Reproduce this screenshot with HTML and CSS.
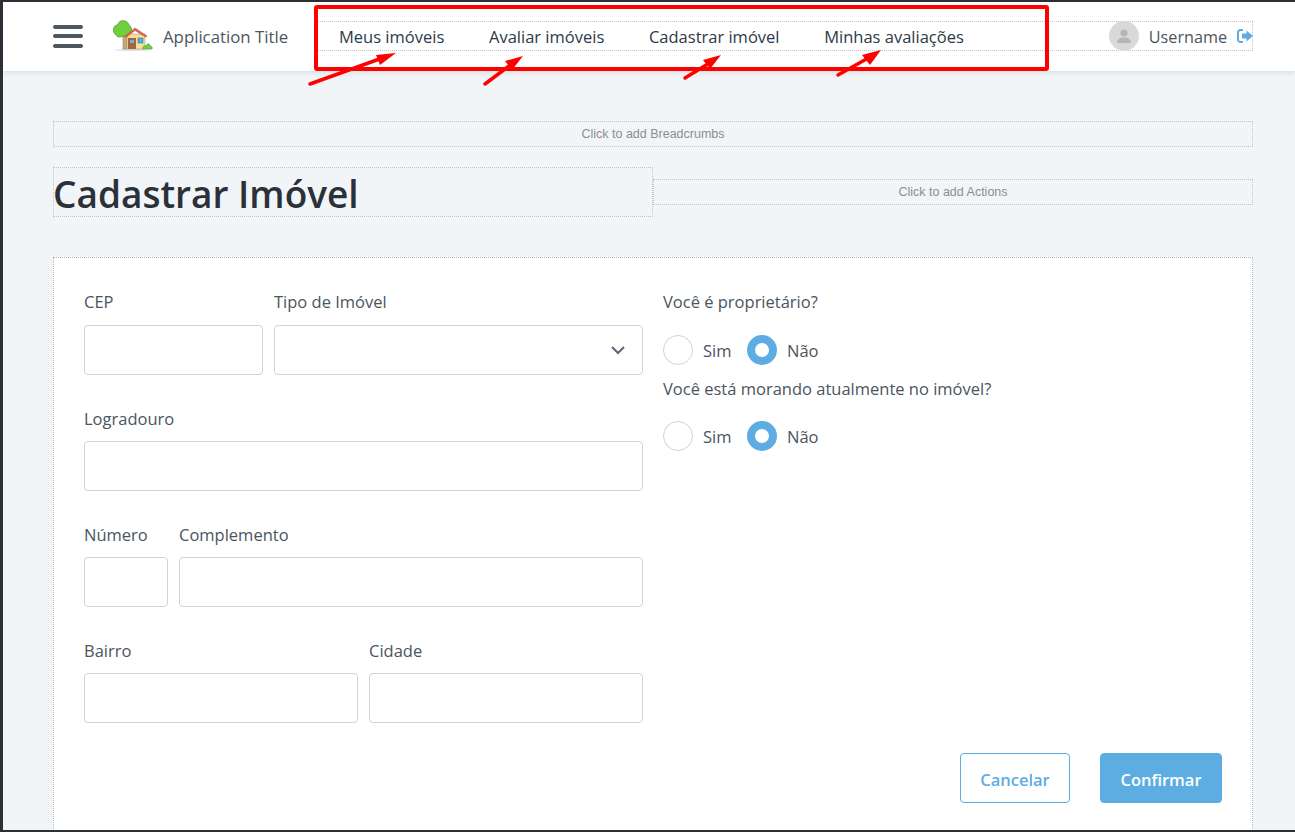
FILE: index.html
```html
<!DOCTYPE html>
<html lang="en">
<head>
    <meta charset="UTF-8">
    <meta name="viewport" content="width=device-width, initial-scale=1.0">
    <title>Cadastrar Imóvel</title>
    <link rel="stylesheet" href="styles.css">
</head>
<body>
    <div class="window">
        <header class="header">
            <div class="menu-icon"><span></span><span></span><span></span></div>
            <svg class="logo" width="40" height="32" viewBox="0 0 40 32">
                <ellipse cx="20" cy="30" rx="19" ry="1" fill="#e3e3e3"/>
                <rect x="10" y="16" width="4" height="13" fill="#c9a878" stroke="#8d7a5c" stroke-width=".5"/>
                <path d="M8 1c4-1 7 1 8 4 3 2 3 6 1 8-1 3-5 4-7 3-3 2-6 1-8-2-2-2-2-6 0-8 1-1 2-1 3-1 0-2 1-3 3-4z" fill="#6fd03c" stroke="#5b8f3a" stroke-width=".8"/>
                <rect x="14" y="14" width="18" height="15" fill="#f6dd9c" stroke="#a8946a" stroke-width=".5"/>
                <path d="M12 16l10-8 12 8-1.500 1L22 10.500 13.500 17z" fill="#e5654c" stroke="#b0503f" stroke-width=".6"/>
                <rect x="15" y="18" width="8" height="11" fill="#a5663c"/>
                <rect x="17" y="20" width="4" height="3" fill="#5fb7de"/>
                <rect x="25" y="18" width="5" height="5" fill="#3fb5ee" stroke="#59606a" stroke-width=".5"/>
                <path d="M30 29c-1-2 1-4 3-3 1-3 4-3 4 0 2 0 3 2 2 3z" fill="#6fd03c" stroke="#5b8f3a" stroke-width=".5"/>
            </svg>
            <span class="app-title">Application Title</span>
            <div class="nav-bar">
                <nav class="nav">
                    <a href="#">Meus imóveis</a>
                    <a href="#">Avaliar imóveis</a>
                    <a href="#">Cadastrar imóvel</a>
                    <a href="#">Minhas avaliações</a>
                </nav>
                <div class="user">
                    <div class="avatar">
                        <svg width="16" height="16" viewBox="0 0 16 16"><circle cx="8" cy="5" r="3.600" fill="#b5b5b5"/><path d="M1 15c0-4 3-5 5-5.500h4c2 .5 5 1.500 5 5.500z" fill="#b5b5b5"/></svg>
                    </div>
                    <span class="username">Username</span>
                    <svg class="logout" width="16" height="14" viewBox="0 0 16 14">
                        <path d="M6 1H3.500A2.500 2.500 0 0 0 1 3.500v7A2.500 2.500 0 0 0 3.500 13H6" fill="none" stroke="#5dade2" stroke-width="2"/>
                        <path d="M5 4.500h4.500V1.500L16 7l-6.500 5.500v-3H5z" fill="#5dade2"/>
                    </svg>
                </div>
            </div>
        </header>

        <main class="content">
            <div class="placeholder breadcrumbs">Click to add Breadcrumbs</div>
            <div class="title-row">
                <h1 class="title">Cadastrar Imóvel</h1>
                <div class="placeholder actions">Click to add Actions</div>
            </div>

            <section class="card">
                <div class="form-columns">
                    <div class="form-left">
                        <div class="form-row">
                            <div class="field w-cep"><label>CEP</label><input type="text"></div>
                            <div class="field grow">
                                <label>Tipo de Imóvel</label>
                                <div class="select">
                                    <svg width="14" height="9" viewBox="0 0 14 9"><path d="M1 1l6 6 6-6" fill="none" stroke="#5a6570" stroke-width="2"/></svg>
                                </div>
                            </div>
                        </div>
                        <div class="form-row">
                            <div class="field grow"><label>Logradouro</label><input type="text"></div>
                        </div>
                        <div class="form-row">
                            <div class="field w-num"><label>Número</label><input type="text"></div>
                            <div class="field grow"><label>Complemento</label><input type="text"></div>
                        </div>
                        <div class="form-row">
                            <div class="field grow"><label>Bairro</label><input type="text"></div>
                            <div class="field grow"><label>Cidade</label><input type="text"></div>
                        </div>
                    </div>
                    <div class="form-right">
                        <div class="question">
                            <label>Você é proprietário?</label>
                            <div class="radios">
                                <span class="radio"></span><span class="radio-text">Sim</span>
                                <span class="radio checked"></span><span class="radio-text">Não</span>
                            </div>
                        </div>
                        <div class="question">
                            <label>Você está morando atualmente no imóvel?</label>
                            <div class="radios">
                                <span class="radio"></span><span class="radio-text">Sim</span>
                                <span class="radio checked"></span><span class="radio-text">Não</span>
                            </div>
                        </div>
                    </div>
                </div>
                <div class="buttons">
                    <button class="btn btn-cancel">Cancelar</button>
                    <button class="btn btn-confirm">Confirmar</button>
                </div>
            </section>
        </main>

        <!-- annotation drawn over the screenshot -->
        <svg class="annotation" width="1295" height="100" viewBox="0 0 1295 100">
            <rect x="316" y="7" width="731" height="62" fill="none" stroke="#ff0000" stroke-width="4" rx="1"/>
            <g stroke="#ff0000" stroke-width="3.500" stroke-linecap="round" fill="#ff0000">
                <line x1="310" y1="84" x2="385" y2="57"/>
                <line x1="485" y1="84" x2="513" y2="63"/>
                <line x1="685" y1="78" x2="711" y2="62"/>
                <line x1="838" y1="75" x2="870" y2="57"/>
            </g>
            <g fill="#ff0000">
                <polygon points="396,53 376,55 380,65"/>
                <polygon points="523,56 505,61 512,70"/>
                <polygon points="721,55 703,60 710,69"/>
                <polygon points="881,50 862,55 870,65"/>
            </g>
        </svg>
    </div>
</body>
</html>
```

FILE: styles.css
```css
* {
    margin: 0;
    padding: 0;
    box-sizing: border-box;
}

body {
    font-family: "Open Sans", sans-serif;
    font-size: 16.500px;
    color: #4a5560;
    background-color: #2b2f36;
    height: 832px;
    padding: 2px 0 2px 3px;
    overflow: hidden;
}

.window {
    position: relative;
    height: 828px;
    background-color: #f2f5f8;
    overflow: hidden;
}

.header {
    display: flex;
    align-items: center;
    height: 69px;
    padding-left: 50px;
    padding-right: 42px;
    padding-bottom: 1px;
    background: white;
    box-shadow: 0 1px 6px rgba(0, 0, 0, 0.12);
}

.menu-icon {
    width: 30px;
    margin-right: 30px;
}

.menu-icon span {
    display: block;
    height: 4px;
    margin-bottom: 5.500px;
    background-color: #4d5760;
    border-radius: 2px;
}

.menu-icon span:last-child {
    margin-bottom: 0;
}

.logo {
    margin-right: 10px;
}

.app-title {
    width: 155px;
    font-size: 16.800px;
    color: #4d5560;
}

.nav-bar {
    display: flex;
    flex: 1;
    justify-content: space-between;
    align-items: center;
    height: 30px;
    border-top: 1px dotted #c4c4c4;
    border-bottom: 1px dotted #c4c4c4;
    border-right: 1px dotted #c4c4c4;
}

.nav {
    display: flex;
    gap: 44.700px;
    padding-left: 21px;
}

.nav a {
    color: #2c3a47;
    text-decoration: none;
}

.user {
    display: flex;
    align-items: center;
}

.avatar {
    display: flex;
    justify-content: center;
    align-items: center;
    width: 30px;
    height: 30px;
    margin-right: 10px;
    background-color: #d9d9d9;
    border-radius: 50%;
}

.username {
    margin-right: 10px;
    padding-top: 1px;
    font-size: 16.200px;
    color: #4d5560;
}

.logout {
    margin-right: -1px;
}

.content {
    padding: 50px 42px 0 50px;
}

.placeholder {
    display: flex;
    justify-content: center;
    align-items: center;
    height: 26px;
    font-family: "Liberation Sans", Arial, sans-serif;
    font-size: 12.500px;
    color: #8e8e8e;
    border: 1px dotted #c4c4c4;
}

.title-row {
    display: flex;
    align-items: center;
    margin-top: 20px;
    margin-bottom: 40px;
}

.title {
    width: 600px;
    height: 50px;
    font-size: 37px;
    font-weight: 600;
    line-height: 52px;
    text-indent: -1px;
    color: #2a3138;
    border: 1px dotted #c4c4c4;
}

.actions {
    flex: 1;
}

.card {
    height: 640px;
    padding: 32px 30px 0 30px;
    background: white;
    border: 1px dotted #b8b8b8;
}

.form-columns {
    display: flex;
    gap: 20px;
}

.form-left {
    width: 559px;
}

.form-row {
    display: flex;
    gap: 11px;
    margin-bottom: 31px;
}

.form-row:last-child {
    margin-bottom: 0;
}

.field {
    display: flex;
    flex-direction: column;
}

.field.grow {
    flex: 1;
}

.w-cep {
    width: 179px;
}

.w-num {
    width: 84px;
}

label {
    display: block;
    height: 24px;
    line-height: 24px;
    margin-bottom: 11px;
}

.form-row + .form-row label,
.question + .question label {
    padding-top: 1px;
}

input,
.select {
    width: 100%;
    height: 50px;
    background: white;
    border: 1px solid #ccd3da;
    border-radius: 4px;
}

.select {
    display: flex;
    justify-content: flex-end;
    align-items: center;
    padding-right: 17px;
}

.question {
    height: 86px;
}

.radios {
    display: flex;
    align-items: center;
    height: 30px;
    margin-top: 21px;
}

.radio {
    width: 30px;
    height: 30px;
    background: white;
    border: 1px solid #ccd3da;
    border-radius: 50%;
}

.radio.checked {
    border: 8px solid #5dade2;
}

.radio-text {
    width: 44px;
    margin-left: 10px;
}

.buttons {
    display: flex;
    justify-content: flex-end;
    gap: 30px;
    margin-top: 30px;
}

.btn {
    height: 50px;
    padding-top: 2px;
    font-family: "Open Sans", sans-serif;
    font-size: 16.500px;
    font-weight: 600;
    border: 1px solid #5dade2;
    border-radius: 4px;
    cursor: pointer;
}

.btn-cancel {
    width: 110px;
    color: #5dade2;
    background: white;
}

.btn-confirm {
    width: 122px;
    color: white;
    background-color: #5dade2;
}

.annotation {
    position: absolute;
    top: -2px;
    left: -3px;
}
```
